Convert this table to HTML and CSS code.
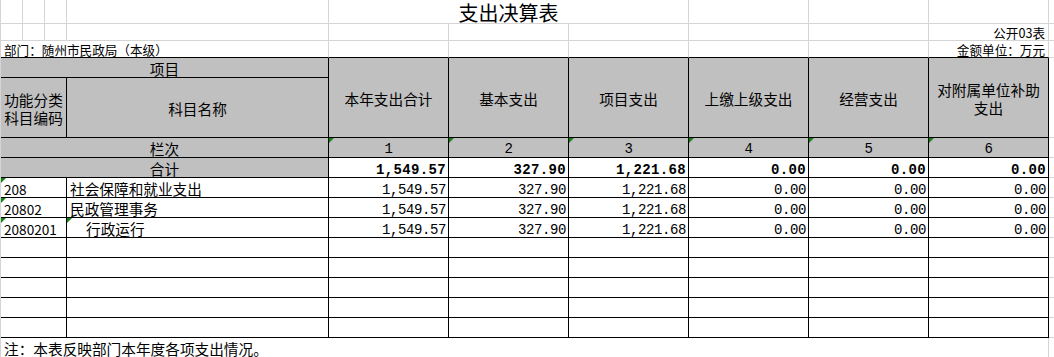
FILE: index.html
```html
<!DOCTYPE html>
<html lang="zh-CN">
<head>
<meta charset="utf-8">
<title>支出决算表</title>
<link rel="stylesheet" href="styles.css">
</head>
<body>
<div class="sheet">
  <!-- row 1 -->
  <div class="c"></div><div class="c"></div><div class="c"></div><div class="c"></div>
  <div class="c title span3">支出决算表</div>
  <div class="c"></div><div class="c"></div><div class="c"></div><div class="c k"></div>
  <!-- row 2 -->
  <div class="c"></div><div class="c"></div><div class="c"></div><div class="c"></div>
  <div class="c"></div><div class="c"></div><div class="c"></div><div class="c"></div><div class="c"></div>
  <div class="c small right">公开03表</div><div class="c k"></div>
  <!-- row 3 -->
  <div class="c small span4 top">部门：随州市民政局（本级）</div>
  <div class="c top"></div><div class="c top"></div><div class="c top"></div><div class="c top"></div><div class="c top"></div>
  <div class="c small top right">金额单位：万元</div><div class="c k"></div>
  <!-- header rows -->
  <div class="c t g span4 center">项目</div>
  <div class="c t g tall wrap">本年支出合计</div>
  <div class="c t g tall wrap">基本支出</div>
  <div class="c t g tall wrap">项目支出</div>
  <div class="c t g tall wrap">上缴上级支出</div>
  <div class="c t g tall wrap">经营支出</div>
  <div class="c t g tall wrap">对附属单位补助支出</div>
  <div class="c k tall"></div>
  <div class="c t g span3 wrap narrow">功能分类科目编码</div>
  <div class="c t g center">科目名称</div>
  <!-- 栏次 -->
  <div class="c t g span4 center">栏次</div>
  <div class="c t g center mono mark">1</div>
  <div class="c t g center mono mark">2</div>
  <div class="c t g center mono mark">3</div>
  <div class="c t g center mono mark">4</div>
  <div class="c t g center mono mark">5</div>
  <div class="c t g center mono mark">6</div>
  <div class="c k"></div>
  <!-- 合计 -->
  <div class="c t g span4 center">合计</div>
  <div class="c t num bold">1,549.57</div>
  <div class="c t num bold">327.90</div>
  <div class="c t num bold">1,221.68</div>
  <div class="c t num bold">0.00</div>
  <div class="c t num bold">0.00</div>
  <div class="c t num bold">0.00</div>
  <div class="c k"></div>
  <!-- data 1 -->
  <div class="c t span3 code mark">208</div>
  <div class="c t name">社会保障和就业支出</div>
  <div class="c t num">1,549.57</div>
  <div class="c t num">327.90</div>
  <div class="c t num">1,221.68</div>
  <div class="c t num">0.00</div>
  <div class="c t num">0.00</div>
  <div class="c t num">0.00</div>
  <div class="c k"></div>
  <!-- data 2 -->
  <div class="c t span3 code mark">20802</div>
  <div class="c t name">民政管理事务</div>
  <div class="c t num">1,549.57</div>
  <div class="c t num">327.90</div>
  <div class="c t num">1,221.68</div>
  <div class="c t num">0.00</div>
  <div class="c t num">0.00</div>
  <div class="c t num">0.00</div>
  <div class="c k"></div>
  <!-- data 3 -->
  <div class="c t span3 code mark">2080201</div>
  <div class="c t name indent mark">行政运行</div>
  <div class="c t num">1,549.57</div>
  <div class="c t num">327.90</div>
  <div class="c t num">1,221.68</div>
  <div class="c t num">0.00</div>
  <div class="c t num">0.00</div>
  <div class="c t num">0.00</div>
  <div class="c k"></div>
  <!-- empty rows -->
  <div class="c t span3"></div><div class="c t"></div><div class="c t"></div><div class="c t"></div><div class="c t"></div><div class="c t"></div><div class="c t"></div><div class="c t"></div><div class="c k"></div>
  <div class="c t span3"></div><div class="c t"></div><div class="c t"></div><div class="c t"></div><div class="c t"></div><div class="c t"></div><div class="c t"></div><div class="c t"></div><div class="c k"></div>
  <div class="c t span3"></div><div class="c t"></div><div class="c t"></div><div class="c t"></div><div class="c t"></div><div class="c t"></div><div class="c t"></div><div class="c t"></div><div class="c k"></div>
  <div class="c t span3"></div><div class="c t"></div><div class="c t"></div><div class="c t"></div><div class="c t"></div><div class="c t"></div><div class="c t"></div><div class="c t"></div><div class="c k"></div>
  <div class="c t span3"></div><div class="c t"></div><div class="c t"></div><div class="c t"></div><div class="c t"></div><div class="c t"></div><div class="c t"></div><div class="c t"></div><div class="c k"></div>
  <!-- footer -->
  <div class="c span10 foot">注：本表反映部门本年度各项支出情况。</div>
  <div class="c k"></div>
</div>
</body>
</html>
```

FILE: styles.css
```css
html, body {
  margin: 0;
  padding: 0;
  background: #ffffff;
  overflow: hidden;
}

.sheet {
  --grid: #d4d4d4;
  display: grid;
  grid-template-columns: 22px 22px 22px 262px repeat(6, 120px) 1fr;
  grid-template-rows: 24px 17px 17px 20px 60px 20px 20px repeat(8, 20px) 20px;
  width: 1054px;
  box-sizing: border-box;
  border-left: 1px solid var(--grid);
  font-family: "Noto Sans CJK SC", sans-serif;
  font-size: 14.67px;
  color: #000;
}

.c {
  box-sizing: border-box;
  border-right: 1px solid var(--grid);
  border-bottom: 1px solid var(--grid);
  display: flex;
  align-items: center;
  padding: 2px 3px 0;
  white-space: nowrap;
  line-height: 16px;
  position: relative;
  min-width: 0;
}

.k { border-right: none; }

.span3 { grid-column: span 3; }
.span4 { grid-column: span 4; }
.span10 { grid-column: span 10; }
.tall { grid-row: span 2; }

.top { border-bottom-color: #000; }
.t { border-right-color: #000; border-bottom-color: #000; }
.g { background: #c0c0c0; }

.title {
  justify-content: center;
  font-size: 20px;
  line-height: 22px;
  padding-top: 3px;
}

.small {
  font-size: 12.6px;
  line-height: 14px;
}

.right { justify-content: flex-end; padding-right: 3px; }
.center { justify-content: center; }

.wrap {
  white-space: normal;
  text-align: center;
  justify-content: center;
  line-height: 18px;
  padding: 2px 5px 0;
}

.narrow { padding: 2px 2px 0; }

.mono {
  font-family: "Liberation Mono", monospace;
  font-size: 14px;
  letter-spacing: -0.4px;
  padding-top: 3px;
}

.num {
  justify-content: flex-end;
  font-family: "Liberation Mono", monospace;
  font-size: 14px;
  letter-spacing: -0.4px;
  padding: 4px 2px 0 0;
}

.bold {
  font-weight: bold;
  letter-spacing: 0.35px;
}

.code {
  font-family: "Noto Sans CJK SC", sans-serif;
  font-size: 13.6px;
  padding: 3px 0 0 3px;
}

.name { padding-left: 3px; }
.indent { padding-left: 19px; }

.foot { padding-left: 3px; }

.mark::before {
  content: "";
  position: absolute;
  top: 0;
  left: 0;
  width: 0;
  height: 0;
  border-top: 5px solid #168216;
  border-right: 5px solid transparent;
}
```
